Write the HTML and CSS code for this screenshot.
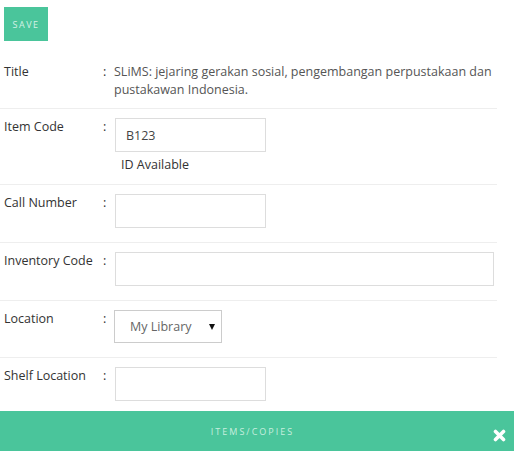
FILE: index.html
```html
<!DOCTYPE html>
<html lang="id">
<head>
<meta charset="utf-8">
<title>Items/Copies</title>
<link rel="stylesheet" href="styles.css">
</head>
<body>
<div class="toolbar">
  <button class="btn-save" type="button">SAVE</button>
</div>
<form class="form">
  <div class="row row-title">
    <div class="label">Title</div>
    <div class="colon">:</div>
    <div class="value text">SLiMS: jejaring gerakan sosial, pengembangan perpustakaan dan pustakawan Indonesia.</div>
  </div>
  <div class="row">
    <div class="label">Item Code</div>
    <div class="colon">:</div>
    <div class="value">
      <input class="field field-short" type="text" value="B123">
      <div class="hint">ID Available</div>
    </div>
  </div>
  <div class="row">
    <div class="label">Call Number</div>
    <div class="colon">:</div>
    <div class="value"><input class="field field-short" type="text"></div>
  </div>
  <div class="row">
    <div class="label">Inventory Code</div>
    <div class="colon">:</div>
    <div class="value"><input class="field field-long" type="text"></div>
  </div>
  <div class="row">
    <div class="label">Location</div>
    <div class="colon">:</div>
    <div class="value">
      <div class="select-wrap"><select class="select"><option>My Library</option></select></div>
    </div>
  </div>
  <div class="row row-last">
    <div class="label">Shelf Location</div>
    <div class="colon">:</div>
    <div class="value"><input class="field field-short" type="text"></div>
  </div>
</form>
<div class="footer">
  <span class="footer-title">ITEMS/COPIES</span>
  <svg class="close" width="13" height="13" viewBox="0 0 13 13" aria-label="close">
    <path d="M2.5 2.5 L10.5 10.5 M10.5 2.5 L2.5 10.5" stroke="#fff" stroke-width="3.6" stroke-linecap="round"/>
  </svg>
</div>
</body>
</html>
```
FILE: styles.css
```css
html, body {
  margin: 0;
  padding: 0;
  background: #fff;
}
body {
  font-family: "Open Sans", "Noto Sans", sans-serif;
  font-size: 12.5px;
  color: #333;
  width: 514px;
  overflow: hidden;
}
.toolbar {
  padding: 7px 4px 13px;
}
.btn-save {
  display: block;
  width: 44px;
  height: 34px;
  border: 0;
  margin: 0;
  padding: 0;
  background: #4ac59b;
  color: #d4f1e6;
  font-family: "Open Sans", sans-serif;
  font-size: 9px;
  letter-spacing: 1.5px;
}
.form {
  width: 497px;
}
.row {
  display: grid;
  grid-template-columns: 99px 11px 1fr;
  padding: 9px 0 10px 4px;
  border-bottom: 1px solid #eee;
  line-height: 18px;
}
.row-title {
  padding-bottom: 9px;
}
.row-last {
  border-bottom: 0;
  padding-bottom: 6px;
}
.value.text {
  color: #555;
  padding-right: 3px;
}
.field {
  display: block;
  box-sizing: border-box;
  height: 34px;
  margin: 0 0 4px 1px;
  border: 1px solid #ddd;
  padding: 0 10px;
  font-family: "Open Sans", sans-serif;
  font-size: 12.5px;
  color: #444;
  background: #fff;
  outline: none;
}
.field-short {
  width: 151px;
}
.field-long {
  width: 379px;
}
.hint {
  padding-left: 7px;
  color: #333;
}
.select-wrap {
  position: relative;
  width: 108px;
  margin-bottom: 4px;
}
.select {
  display: block;
  box-sizing: border-box;
  width: 108px;
  height: 33px;
  border: 1px solid #ccc;
  border-radius: 0;
  padding: 0 0 0 15px;
  background: #fff;
  font-family: "Open Sans", sans-serif;
  font-size: 12.5px;
  color: #666;
  appearance: none;
  -webkit-appearance: none;
}
.select-wrap::after {
  content: "";
  position: absolute;
  right: 7px;
  top: 14px;
  border-left: 3px solid transparent;
  border-right: 3px solid transparent;
  border-top: 6px solid #111;
  pointer-events: none;
}
.footer {
  position: relative;
  height: 40px;
  padding-right: 9px;
  background: #4ac59b;
  display: flex;
  align-items: center;
  justify-content: center;
}
.footer-title {
  font-size: 9px;
  letter-spacing: 2px;
  color: #c8eedf;
}
.close {
  position: absolute;
  right: 8px;
  top: 18px;
}
```
